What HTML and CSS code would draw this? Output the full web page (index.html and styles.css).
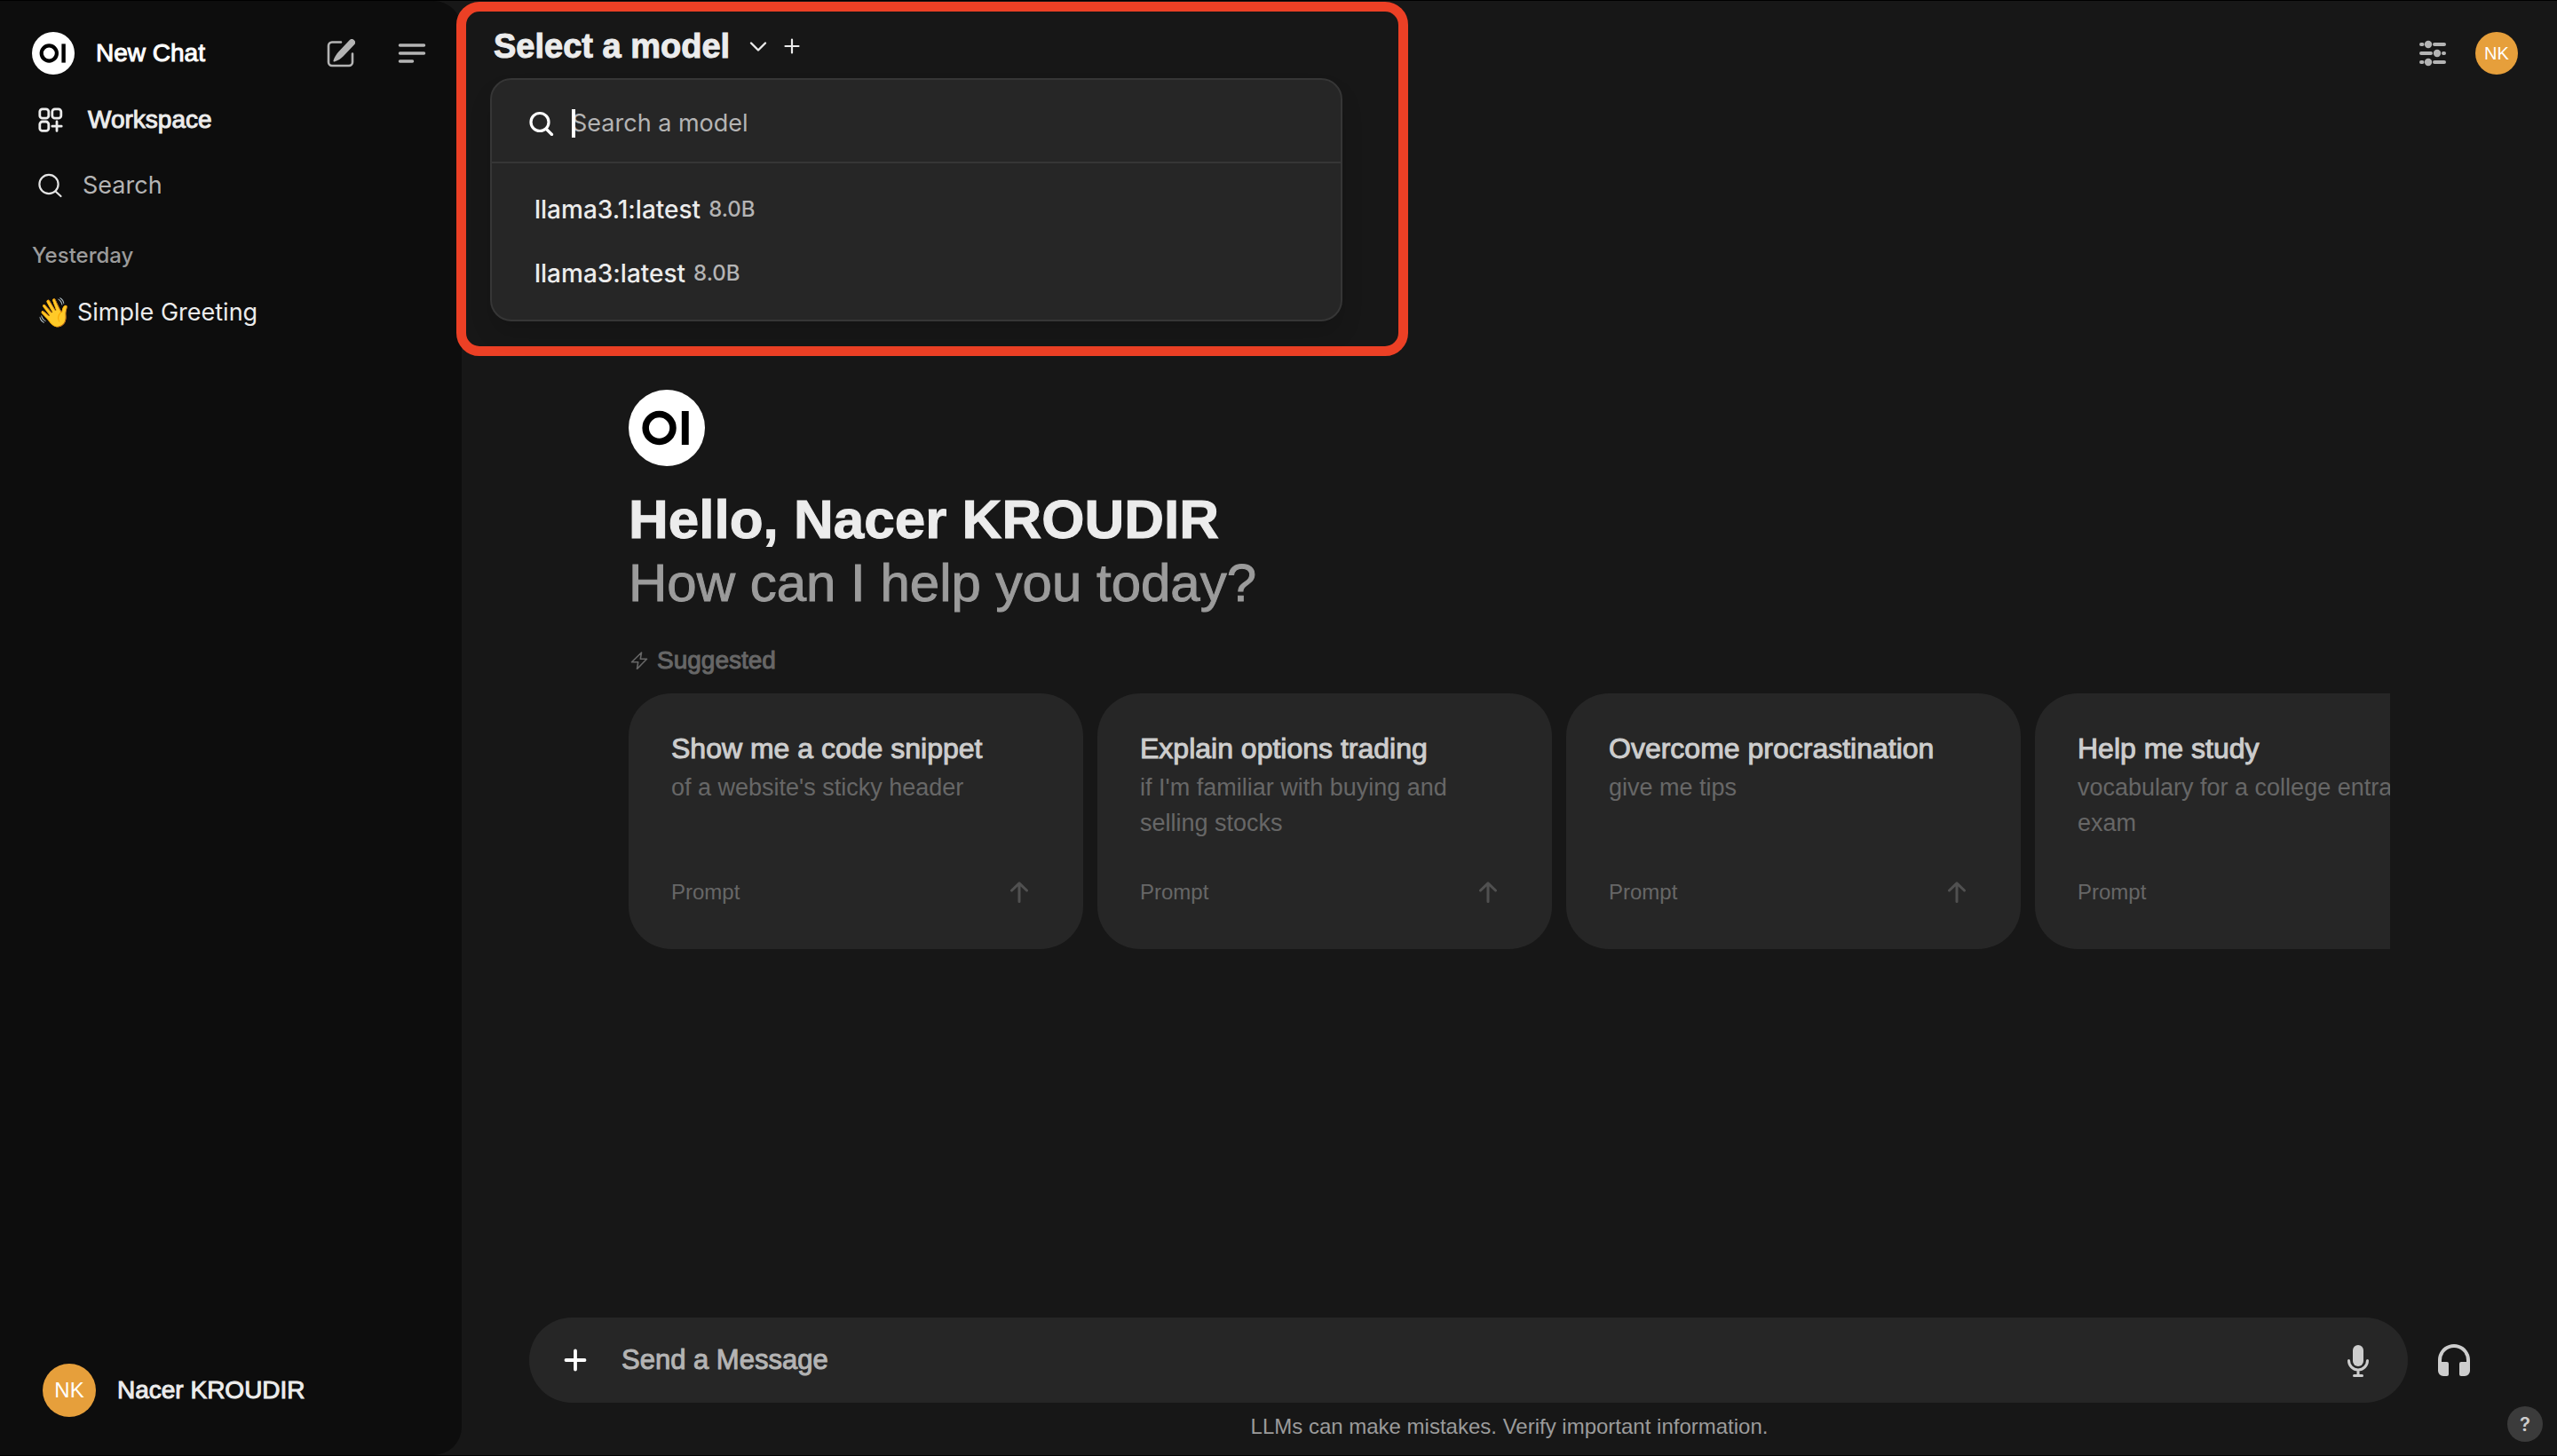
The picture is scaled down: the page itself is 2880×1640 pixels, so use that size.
FILE: index.html
```html
<!DOCTYPE html>
<html lang="en">
<head>
<meta charset="utf-8">
<meta name="viewport" content="width=device-width, initial-scale=1">
<title>New Chat</title>
<link rel="stylesheet" href="styles.css">
</head>
<body>
<div class="app">
  <aside class="sidebar">
    <div class="sidebar-top">
      <a class="new-chat" href="#">
        <svg class="logo" viewBox="0 0 48 48" aria-hidden="true"><circle cx="24" cy="24" r="24" fill="#fff"/><circle cx="19.3" cy="24" r="8.6" fill="none" stroke="#000" stroke-width="4.2"/><path d="M33.4 13.4h4.4v21.2h-4.4z" fill="#000"/></svg>
        <span class="medium">New Chat</span>
      </a>
      <button class="icon-button" aria-label="Edit">
        <svg class="icon-32" viewBox="0 0 32 32" fill="none"><path d="M16 3.500H6a4 4 0 0 0-4 4V26a4 4 0 0 0 4 4h19a4 4 0 0 0 4-4V16.500" stroke="#b4b4b4" stroke-width="2.600" stroke-linecap="round"/><path d="M25.600 1.200a3.700 3.700 0 0 1 5.300 5.300L18.500 19.400c-2.500 2.500-5.500 4.600-9.800 6.100-.8.200-1.500-.5-1.200-1.300 1.400-4.200 3.400-7.500 6.100-10.300z" fill="#b4b4b4"/></svg>
      </button>
      <button class="icon-button" aria-label="Toggle sidebar">
        <svg class="icon-32" viewBox="0 0 32 32" fill="none" stroke="#b4b4b4" stroke-width="3.500" stroke-linecap="round"><path d="M2.500 7h27M2.500 16h27M2.500 25h14"/></svg>
      </button>
    </div>
    <nav class="sidebar-nav">
      <a class="nav-row workspace" href="#">
        <svg class="icon-28" viewBox="0 0 28 28" fill="none" stroke="#ececec" stroke-width="2.800" stroke-linecap="round"><rect x="1.800" y="1.800" width="10" height="10.400" rx="3"/><rect x="15.800" y="1.800" width="10" height="10.400" rx="3"/><rect x="1.800" y="16" width="10" height="10.400" rx="3"/><path d="M21 16v10.400M15.800 21.200h10.400"/></svg>
        <span class="medium">Workspace</span>
      </a>
      <label class="nav-row search">
        <svg class="icon-28" viewBox="0 0 28 28" fill="none" stroke="#e3e3e3" stroke-width="2.200"><circle cx="12" cy="12.500" r="10.600"/><path d="M19.500 20.500l6 5.500" stroke-linecap="round"/></svg>
        <input class="text-input" type="text" placeholder="Search" aria-label="Search chats">
      </label>
    </nav>
    <h2 class="history-label">Yesterday</h2>
    <a class="chat-link" href="#"><span class="emoji">👋</span> Simple Greeting</a>
    <button class="profile">
      <span class="avatar avatar-large">NK</span>
      <span class="medium">Nacer KROUDIR</span>
    </button>
  </aside>

  <main class="main">
    <header class="topbar">
      <div class="model-picker">
        <button class="model-button">Select a model
          <svg class="icon-20" viewBox="0 0 20 20" fill="none" stroke="#ececec" stroke-width="2.400" stroke-linecap="round" stroke-linejoin="round"><path d="M2 6.500l8 8 8-8"/></svg>
        </button>
        <button class="add-model" aria-label="Add model">
          <svg class="icon-20" viewBox="0 0 20 20" fill="none" stroke="#ececec" stroke-width="2.200" stroke-linecap="round"><path d="M10 2.500v15M2.500 10h15"/></svg>
        </button>
        <div class="model-menu">
          <label class="model-search">
            <svg class="icon-28" viewBox="0 0 28 28" fill="none" stroke="#fff" stroke-width="3.200"><circle cx="12" cy="12.500" r="10"/><path d="M19.500 20.500l6 6" stroke-linecap="round"/></svg>
            <span class="caret"></span>
            <input class="text-input" type="text" placeholder="Search a model">
          </label>
          <ul class="model-list">
            <li><button class="model-option">llama3.1:latest <span class="model-size">8.0B</span></button></li>
            <li><button class="model-option">llama3:latest <span class="model-size">8.0B</span></button></li>
          </ul>
        </div>
      </div>
      <div class="topbar-actions">
        <button class="icon-button" aria-label="Controls">
          <svg class="icon-32" viewBox="0 0 32 32" fill="#b4b4b4" stroke="#b4b4b4" stroke-width="4" stroke-linecap="round"><path d="M3 6h1.500M18 6h11M3 16h11M28 16h1M3 26h1.500M18 26h11" /><g stroke="none"><circle cx="11" cy="6" r="4.200"/><circle cx="21" cy="16" r="4.200"/><circle cx="11" cy="26" r="4.200"/></g></svg>
        </button>
        <button class="avatar" aria-label="User menu">NK</button>
      </div>
    </header>

    <section class="welcome">
      <svg class="hero-logo" viewBox="0 0 48 48" aria-hidden="true"><circle cx="24" cy="24" r="24" fill="#fff"/><circle cx="19.300" cy="24" r="8.600" fill="none" stroke="#000" stroke-width="4.200"/><path d="M33.400 13.400h4.400v21.200h-4.400z" fill="#000"/></svg>
      <h1 class="greeting">Hello, Nacer KROUDIR</h1>
      <p class="question">How can I help you today?</p>
      <p class="suggested">
        <svg class="icon-20" viewBox="0 0 20 20" fill="none" stroke="#676767" stroke-width="1.600" stroke-linejoin="round"><path d="M12.500 1L1.500 11.800h7.200L7.500 19.500l11-11.300h-7.200z"/></svg>
        Suggested
      </p>
      <div class="cards">
        <button class="card"><span class="card-title">Show me a code snippet</span><span class="card-text">of a website's sticky header</span><span class="card-foot">Prompt<svg class="arrow" viewBox="0 0 24 24"><path d="M12 22.500V2M3.500 10L12 1.800 20.500 10"/></svg></span></button>
        <button class="card"><span class="card-title">Explain options trading</span><span class="card-text">if I'm familiar with buying and selling stocks</span><span class="card-foot">Prompt<svg class="arrow" viewBox="0 0 24 24"><path d="M12 22.500V2M3.500 10L12 1.800 20.500 10"/></svg></span></button>
        <button class="card"><span class="card-title">Overcome procrastination</span><span class="card-text">give me tips</span><span class="card-foot">Prompt<svg class="arrow" viewBox="0 0 24 24"><path d="M12 22.500V2M3.500 10L12 1.800 20.500 10"/></svg></span></button>
        <button class="card"><span class="card-title">Help me study</span><span class="card-text">vocabulary for a college entrance exam</span><span class="card-foot">Prompt<svg class="arrow" viewBox="0 0 24 24"><path d="M12 22.500V2M3.500 10L12 1.800 20.500 10"/></svg></span></button>
      </div>
    </section>

    <footer class="composer-area">
      <form class="composer-row">
        <div class="composer">
          <button class="icon-button" type="button" aria-label="More">
            <svg class="icon-28" viewBox="0 0 28 28" fill="none" stroke="#fff" stroke-width="3.800" stroke-linecap="round"><path d="M14 3.500v21M3.500 14h21"/></svg>
          </button>
          <input class="message-input" type="text" placeholder="Send a Message" aria-label="Message">
          <button class="icon-button" type="button" aria-label="Record voice">
            <svg class="icon-40" viewBox="0 0 40 40" fill="none" stroke="#cdcdcd" stroke-width="3" stroke-linecap="round"><rect x="14" y="3" width="12" height="24" rx="6" fill="#cdcdcd" stroke="none"/><path d="M9.500 20.500a10.500 10.500 0 0 0 21 0M20 31v6M15.500 37.500h9"/></svg>
          </button>
        </div>
        <button class="icon-button" type="button" aria-label="Call">
          <svg class="icon-40" viewBox="0 0 40 40" fill="#cdcdcd"><path d="M20 2C10 2 2 10 2 20v12a6 6 0 0 0 6 6h4a2 2 0 0 0 2-2V24a2 2 0 0 0-2-2H6v-2a14 14 0 0 1 28 0v2h-6a2 2 0 0 0-2 2v12a2 2 0 0 0 2 2h4a6 6 0 0 0 6-6V20C38 10 30 2 20 2z"/></svg>
        </button>
      </form>
      <p class="disclaimer">LLMs can make mistakes. Verify important information.</p>
    </footer>
    <div class="highlight"></div>
    <button class="help" aria-label="Help">?</button>
  </main>
</div>
</body>
</html>
```
FILE: styles.css
```css
*, *::before, *::after { box-sizing: border-box; }

body {
  margin: 0;
  background: #000;
  color: #ececec;
  font: 28px/40px "Liberation Sans", Arial, sans-serif;
}

h1, h2, p, ul { margin: 0; padding: 0; }
ul { list-style: none; }
a { color: inherit; text-decoration: none; }
button, input { border: 0; padding: 0; background: none; color: inherit; font: inherit; text-align: left; }
svg { display: block; flex: none; }

.app {
  display: flex;
  min-height: 100vh;
  padding: 1px 0;
  background: linear-gradient(#000 1px, #171717 1px, #171717 calc(100% - 1px), #000 calc(100% - 1px));
}

.medium { -webkit-text-stroke: 1px currentColor; }
.icon-button { display: flex; }
.icon-20 { width: 20px; height: 20px; }
.icon-28 { width: 28px; height: 28px; }
.icon-32 { width: 32px; height: 32px; }
.icon-40 { width: 40px; height: 40px; }

.text-input {
  flex: 1;
  min-width: 0;
  outline: 0;
  font: 27px/40px Inter, sans-serif;
}
.text-input::placeholder { color: #b4b4b4; opacity: 1; }

/* Sidebar */
.sidebar {
  display: flex;
  flex-direction: column;
  flex: none;
  width: 520px;
  padding: 35px 36px 36px;
  border-radius: 0 32px 32px 0;
  background: #0d0d0d;
}
.sidebar-top { display: flex; align-items: center; gap: 48px; padding-right: 4px; }
.new-chat { display: flex; align-items: center; flex: 1; gap: 24px; color: #fff; }
.logo { width: 48px; height: 48px; }
.sidebar-nav { padding: 14px 7px 0; }
.nav-row { display: flex; align-items: center; height: 74px; }
.workspace { gap: 28px; }
.search { gap: 22px; }
.history-label { margin-top: 18px; color: #9b9b9b; font: 500 24px/48px Inter, sans-serif; }
.chat-link {
  display: flex;
  align-items: center;
  gap: 6px;
  height: 80px;
  padding: 0 5px;
  font: 27px/40px Inter, sans-serif;
}
.emoji { font-size: 32px; }
.profile { display: flex; align-items: center; gap: 24px; margin: auto 0 7px; padding: 0 12px; }
.avatar {
  display: flex;
  align-items: center;
  justify-content: center;
  flex: none;
  width: 48px;
  height: 48px;
  border-radius: 50%;
  background: #e69f3b;
  color: #fff;
  font-size: 20px;
}
.avatar-large { width: 60px; height: 60px; font-size: 24px; }

/* Main column */
.main { position: relative; display: flex; flex-direction: column; flex: 1; min-width: 0; }
.topbar { display: flex; justify-content: space-between; padding: 27px 44px 36px 36px; }
.model-picker { position: relative; display: flex; align-items: center; gap: 18px; height: 48px; }
.model-button { display: flex; align-items: center; gap: 22px; font-size: 38px; font-weight: 700; line-height: 48px; -webkit-text-stroke: 1px currentColor; }
.model-menu {
  position: absolute;
  top: 60px;
  left: -4px;
  z-index: 1;
  width: 960px;
  border: 2px solid #363636;
  border-radius: 24px;
  background: #262626;
  box-shadow: 0 16px 24px rgba(0, 0, 0, 0.12);
}
.model-search {
  position: relative;
  display: flex;
  align-items: center;
  gap: 20px;
  height: 94px;
  padding: 6px 42px 0;
  border-bottom: 2px solid #363636;
}
.caret { position: absolute; left: 90px; width: 4px; height: 32px; background: #fff; }
.model-list { padding: 16px 12px; }
.model-option {
  display: flex;
  align-items: center;
  gap: 9px;
  width: 100%;
  height: 72px;
  padding: 0 36px;
  font: 500 28px/40px Inter, sans-serif;
}
.model-size { color: #b4b4b4; font-size: 24px; }
.topbar-actions { display: flex; align-items: center; gap: 32px; margin-top: 8px; }

/* Welcome */
.welcome {
  display: flex;
  flex-direction: column;
  justify-content: center;
  flex: 1;
  padding: 0 188px 96px;
}
.hero-logo { width: 86px; height: 86px; margin-bottom: 24px; }
.greeting { font-size: 62px; line-height: 72px; -webkit-text-stroke: 1px currentColor; }
.question { color: #9b9b9b; font-size: 60px; line-height: 72px; -webkit-text-stroke: 1px currentColor; }
.suggested { display: flex; align-items: center; gap: 10px; margin: 31px 0 17px; padding-left: 2px; color: #676767; -webkit-text-stroke: 1px currentColor; }
.cards { display: flex; gap: 16px; overflow: hidden; }
.card {
  display: flex;
  flex-direction: column;
  flex: none;
  width: 512px;
  height: 288px;
  padding: 40px 40px 48px 48px;
  border-radius: 48px;
  background: #262626;
}
.card-title { margin-bottom: 2px; color: #cdcdcd; font-size: 32px; line-height: 44px; -webkit-text-stroke: 1px currentColor; }
.card-text { color: #676767; font-size: 27px; }
.card-foot {
  display: flex;
  align-items: center;
  justify-content: space-between;
  margin-top: auto;
  padding-right: 20px;
  color: #676767;
  font-size: 24px;
  line-height: 32px;
}
.arrow { width: 24px; height: 24px; fill: none; stroke: #505050; stroke-width: 3px; stroke-linecap: round; stroke-linejoin: round; }

/* Composer */
.composer-row { display: flex; align-items: center; gap: 32px; padding: 0 96px 0 76px; }
.composer {
  display: flex;
  align-items: center;
  flex: 1;
  gap: 38px;
  height: 96px;
  padding: 0 36px 0 38px;
  border-radius: 48px;
  background: #262626;
}
.message-input { flex: 1; min-width: 0; outline: 0; font-size: 31px; }
.message-input::placeholder { color: #b4b4b4; opacity: 1; -webkit-text-stroke: 1px currentColor; }
.disclaimer { padding: 9px 0 14px; color: #9b9b9b; font-size: 24px; line-height: 36px; text-align: center; }
.help {
  position: absolute;
  right: 16px;
  bottom: 15px;
  width: 40px;
  height: 40px;
  border-radius: 50%;
  background: #3b3b3b;
  color: #cdcdcd;
  font: 600 22px/40px Inter, sans-serif;
  text-align: center;
}

/* Annotation frame around the model picker */
.highlight {
  position: absolute;
  top: 1px;
  left: -6px;
  width: 1072px;
  height: 399px;
  border: 11px solid #ec4025;
  border-radius: 26px;
  pointer-events: none;
}
```
